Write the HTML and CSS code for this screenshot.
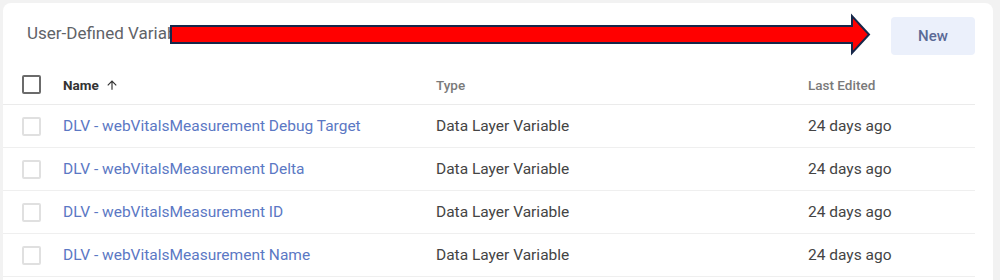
FILE: index.html
```html
<!DOCTYPE html>
<html>
<head>
<meta charset="utf-8">
<link rel="stylesheet" href="styles.css">
</head>
<body>
<div class="card">
  <div class="card-head">
    <div class="title">User-Defined Variables</div>
    <button class="btn-new">New</button>
  </div>
  <div class="table">
    <div class="row head">
      <span class="cb dark"></span>
      <span class="th name">Name <svg class="sort" width="14" height="14" viewBox="0 0 24 24"><path d="M4 12l1.41 1.41L11 7.83V20h2V7.83l5.58 5.59L20 12l-8-8-8 8z" fill="#333"/></svg></span>
      <span class="th">Type</span>
      <span class="th">Last Edited</span>
    </div>
    <div class="row">
      <span class="cb"></span>
      <a class="link">DLV - webVitalsMeasurement Debug Target</a>
      <span class="cell">Data Layer Variable</span>
      <span class="cell">24 days ago</span>
    </div>
    <div class="row">
      <span class="cb"></span>
      <a class="link">DLV - webVitalsMeasurement Delta</a>
      <span class="cell">Data Layer Variable</span>
      <span class="cell">24 days ago</span>
    </div>
    <div class="row">
      <span class="cb"></span>
      <a class="link">DLV - webVitalsMeasurement ID</a>
      <span class="cell">Data Layer Variable</span>
      <span class="cell">24 days ago</span>
    </div>
    <div class="row">
      <span class="cb"></span>
      <a class="link">DLV - webVitalsMeasurement Name</a>
      <span class="cell">Data Layer Variable</span>
      <span class="cell">24 days ago</span>
    </div>
  </div>
</div>
<svg class="arrow" width="1000" height="70" viewBox="0 0 1000 70">
  <path d="M171 26 H852 V16 L869 34.5 L852 53 V43 H171 Z" fill="#ff0000" stroke="#16284a" stroke-width="2" stroke-linejoin="miter"/>
</svg>
</body>
</html>
```

FILE: styles.css
```css
html, body {
  margin: 0;
  padding: 0;
  background: #f2f2f2;
  font-family: Roboto, "Liberation Sans", Arial, sans-serif;
  overflow: hidden;
}
body {
  width: 1000px;
  height: 280px;
  position: relative;
}
.card {
  margin: 3px 0 0 3px;
  width: 990px;
  height: 290px;
  background: #fff;
  border-radius: 8px 8px 0 0;
}
.card-head {
  height: 62px;
  display: flex;
  align-items: center;
  justify-content: space-between;
  padding: 0 18px 0 24px;
}
.title {
  font-size: 17px;
  color: #5f6368;
  margin-top: -2px;
}
.btn-new {
  width: 84px;
  height: 38px;
  border: none;
  border-radius: 4px;
  background: #ebf0fb;
  color: #5b6a96;
  font-family: inherit;
  font-size: 15px;
  font-weight: 500;
  margin-top: 4px;
}
.row {
  display: grid;
  grid-template-columns: 41px 373px 372px 1fr;
  align-items: center;
  height: 42px;
  padding-left: 19px;
  border-bottom: 1px solid #efefef;
  margin-right: 18px;
}
.row.head {
  height: 39px;
  border-bottom: 1px solid #ebebeb;
}
.cb {
  width: 15px;
  height: 15px;
  border: 2px solid #e0e0e0;
  border-radius: 2px;
}
.cb.dark {
  border-color: #6b6b6b;
}
.th {
  font-size: 13.5px;
  font-weight: 500;
  color: #7a7a7a;
}
.th.name {
  font-weight: 700;
  color: #333;
  display: flex;
  align-items: center;
  gap: 6px;
}
.sort {
  display: block;
}
.link {
  font-size: 15.5px;
  color: #5b78c4;
}
.cell {
  font-size: 15.5px;
  color: #444;
}
.arrow {
  position: absolute;
  left: 0;
  top: 0;
}
```
